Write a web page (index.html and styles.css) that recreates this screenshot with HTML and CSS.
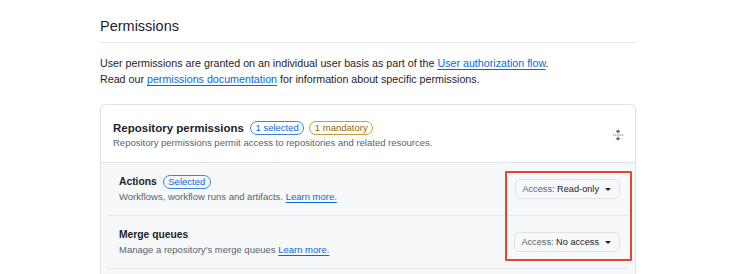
FILE: index.html
```html
<!DOCTYPE html>
<html lang="en">
<head>
<meta charset="utf-8">
<title>Permissions</title>
<link rel="stylesheet" href="styles.css">
</head>
<body>
<main class="page">
  <div class="subhead">
    <h2 class="subhead-title">Permissions</h2>
  </div>
  <p class="intro">
    User permissions are granted on an individual user basis as part of the <a href="#">User authorization flow</a>.<br>
    Read our <a href="#">permissions documentation</a> for information about specific permissions.
  </p>

  <section class="box">
    <header class="box-header">
      <div class="box-header-main">
        <div class="title-row">
          <h3 class="box-title">Repository permissions</h3>
          <span class="badge badge-blue">1 selected</span>
          <span class="badge badge-gold">1 mandatory</span>
        </div>
        <p class="box-desc">Repository permissions permit access to repositories and related resources.</p>
      </div>
      <button class="icon-btn" aria-label="Expand all">
        <svg viewBox="0 0 16 16" width="12" height="12" aria-hidden="true"><path d="m8.177.677 2.896 2.896a.25.25 0 0 1-.177.427H8.75v1.25a.75.75 0 0 1-1.5 0V4H5.104a.25.25 0 0 1-.177-.427L7.823.677a.25.25 0 0 1 .354 0ZM7.25 10.750a.75.75 0 0 1 1.5 0V12h2.146a.25.25 0 0 1 .177.427l-2.896 2.896a.25.25 0 0 1-.354 0l-2.896-2.896A.25.25 0 0 1 5.104 12H7.25v-1.25Zm-5-2a.75.75 0 0 0 0-1.5h-.5a.75.75 0 0 0 0 1.5h.5ZM6 8a.75.75 0 0 1-.75.75h-.5a.75.75 0 0 1 0-1.5h.5A.75.75 0 0 1 6 8Zm2.25.75a.75.75 0 0 0 0-1.5h-.5a.75.75 0 0 0 0 1.5h.5ZM12 8a.75.75 0 0 1-.75.75h-.5a.75.75 0 0 1 0-1.5h.5A.75.75 0 0 1 12 8Zm2.25.75a.75.75 0 0 0 0-1.5h-.5a.75.75 0 0 0 0 1.5h.5Z"/></svg>
      </button>
    </header>

    <div class="rows">
      <div class="row">
        <div class="row-main">
          <div class="title-row">
            <h4 class="row-title">Actions</h4>
            <span class="badge badge-blue">Selected</span>
          </div>
          <p class="row-desc">Workflows, workflow runs and artifacts. <a href="#">Learn more.</a></p>
        </div>
        <button class="select-btn"><span class="muted">Access:</span>&nbsp;Read-only<span class="caret"></span></button>
      </div>
      <div class="row">
        <div class="row-main">
          <div class="title-row">
            <h4 class="row-title">Merge queues</h4>
          </div>
          <p class="row-desc">Manage a repository's merge queues <a href="#">Learn more.</a></p>
        </div>
        <button class="select-btn"><span class="muted">Access:</span>&nbsp;No access<span class="caret"></span></button>
      </div>
    </div>

    <div class="highlight" aria-hidden="true"></div>
  </section>
</main>
</body>
</html>
```

FILE: styles.css
```css
html, body {
  margin: 0;
  padding: 0;
  background: #ffffff;
  overflow: hidden;
}

body {
  font-family: "Liberation Sans", Arial, sans-serif;
  color: #1f2328;
}

.page {
  width: 536px;
  padding: 16px 0 0 100px;
}

.subhead {
  border-bottom: 1px solid #e4e8ec;
  padding-bottom: 6px;
}

.subhead-title {
  margin: 0;
  font-size: 14.5px;
  font-weight: 400;
  line-height: 20px;
}

.intro {
  margin: 12px 0 17px;
  font-size: 10.7px;
  line-height: 16px;
}

a {
  color: #0969da;
  text-decoration: underline;
  text-underline-offset: 2px;
}

.box {
  position: relative;
  border: 1px solid #dde2e7;
  border-radius: 6px;
}

.box-header {
  display: flex;
  align-items: center;
  justify-content: space-between;
  padding: 15px 11px 12px 12px;
  border-bottom: 1px solid #dde2e7;
  background: #ffffff;
  border-radius: 6px 6px 0 0;
}

.title-row {
  display: flex;
  align-items: center;
  height: 16px;
}

.box-title {
  margin: 0 6px 0 0;
  font-size: 11.5px;
  font-weight: 700;
  line-height: 16px;
}

.box-desc,
.row-desc {
  margin: 0;
  font-size: 9.5px;
  line-height: 14px;
  color: #59636e;
}

.badge {
  display: inline-flex;
  align-items: center;
  height: 12px;
  padding: 0 4.5px;
  border: 1px solid;
  border-radius: 999px;
  font-size: 9.5px;
  line-height: 12px;
  margin-right: 5px;
}

.badge-blue {
  color: #0969da;
  border-color: #3c84e0;
}

.badge-gold {
  color: #9a6700;
  border-color: #c79b3a;
}

.icon-btn {
  display: flex;
  align-items: center;
  justify-content: center;
  padding: 0;
  border: 0;
  background: transparent;
  fill: #59636e;
}

.rows {
  background: #f6f8fa;
  padding: 0 6px 14px;
  border-radius: 0 0 6px 6px;
}

.row {
  display: flex;
  align-items: center;
  justify-content: space-between;
  padding: 11px 9px 11px 12px;
  border-bottom: 1px solid #e4e8ec;
}

.row-title {
  margin: 0 6px 0 0;
  font-size: 10.3px;
  font-weight: 700;
  line-height: 16px;
}

.select-btn {
  display: inline-flex;
  align-items: center;
  height: 20px;
  box-sizing: border-box;
  padding: 0 8px 0 6px;
  border: 1px solid #dfe3e8;
  border-radius: 5px;
  background: #f6f8fa;
  font-family: "Liberation Sans", Arial, sans-serif;
  font-size: 9.2px;
  color: #1f2328;
  white-space: nowrap;
}

.muted {
  color: #59636e;
}

.caret {
  display: inline-block;
  width: 0;
  height: 0;
  margin-left: 6px;
  border-left: 3px solid transparent;
  border-right: 3px solid transparent;
  border-top: 3.5px solid #1f2328;
}

.highlight {
  position: absolute;
  left: 404px;
  top: 66px;
  width: 123px;
  height: 86px;
  border: 2px solid #e2472f;
  border-radius: 1px;
  pointer-events: none;
}
```
